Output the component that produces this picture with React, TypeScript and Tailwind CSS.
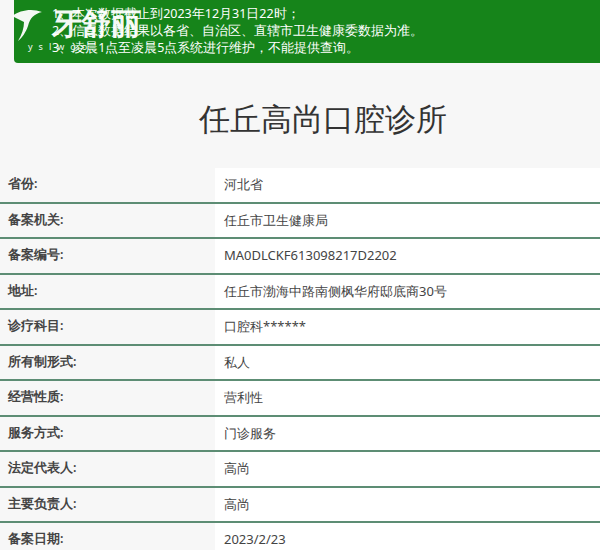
const rows: [string, string][] = [
  ["省份:", "河北省"],
  ["备案机关:", "任丘市卫生健康局"],
  ["备案编号:", "MA0DLCKF613098217D2202"],
  ["地址:", "任丘市渤海中路南侧枫华府邸底商30号"],
  ["诊疗科目:", "口腔科******"],
  ["所有制形式:", "私人"],
  ["经营性质:", "营利性"],
  ["服务方式:", "门诊服务"],
  ["法定代表人:", "高尚"],
  ["主要负责人:", "高尚"],
  ["备案日期:", "2023/2/23"],
];

export default function App() {
  return (
    <div className="relative h-[550px] w-[600px] overflow-hidden bg-[#f7f7f7] font-['Noto_Sans_CJK_SC',sans-serif]">
      <div className="ml-[14px] h-[63px] rounded-bl-sm bg-[#16841a] pl-[38px] pt-[5px] text-[12.5px] leading-[17px] text-white">
        <p>1、本次数据截止到2023年12月31日22时；</p>
        <p>2、信息数据结果以各省、自治区、直辖市卫生健康委数据为准。</p>
        <p>3、凌晨1点至凌晨5点系统进行维护，不能提供查询。</p>
      </div>

      {/* watermark logo */}
      <div className="absolute left-[10px] top-[6px] flex items-start text-white opacity-95">
        <svg width="34" height="36" viewBox="0 0 34 36">
          <path d="M2 10 C10 4 22 2 32 6 C24 8 20 12 18 20 C16 26 12 32 8 35 C12 28 14 22 14 16 C10 14 6 12 2 10 Z" fill="white" />
        </svg>
        <span className="ml-[8px] mt-[2px] text-[30px] font-bold leading-none tracking-tight">牙舒丽</span>
        <span className="absolute left-[18px] top-[34px] text-[9px] tracking-[6px]">yslwgo</span>
      </div>

      <h1 className="mt-[32px] pl-[46px] text-center text-[31px] leading-[46px] text-[#333]">任丘高尚口腔诊所</h1>

      <div className="mt-[27px]">
        {rows.map(([k, v]) => (
          <div key={k} className="flex h-[35.5px] border-b-2 border-[#5d8d74]">
            <div className="flex w-[215px] items-center pl-[8px] text-[12.5px] font-semibold text-[#444]">{k}</div>
            <div className="flex flex-1 items-center bg-white pl-[9px] text-[13px] text-[#444]">{v}</div>
          </div>
        ))}
      </div>
    </div>
  );
}
